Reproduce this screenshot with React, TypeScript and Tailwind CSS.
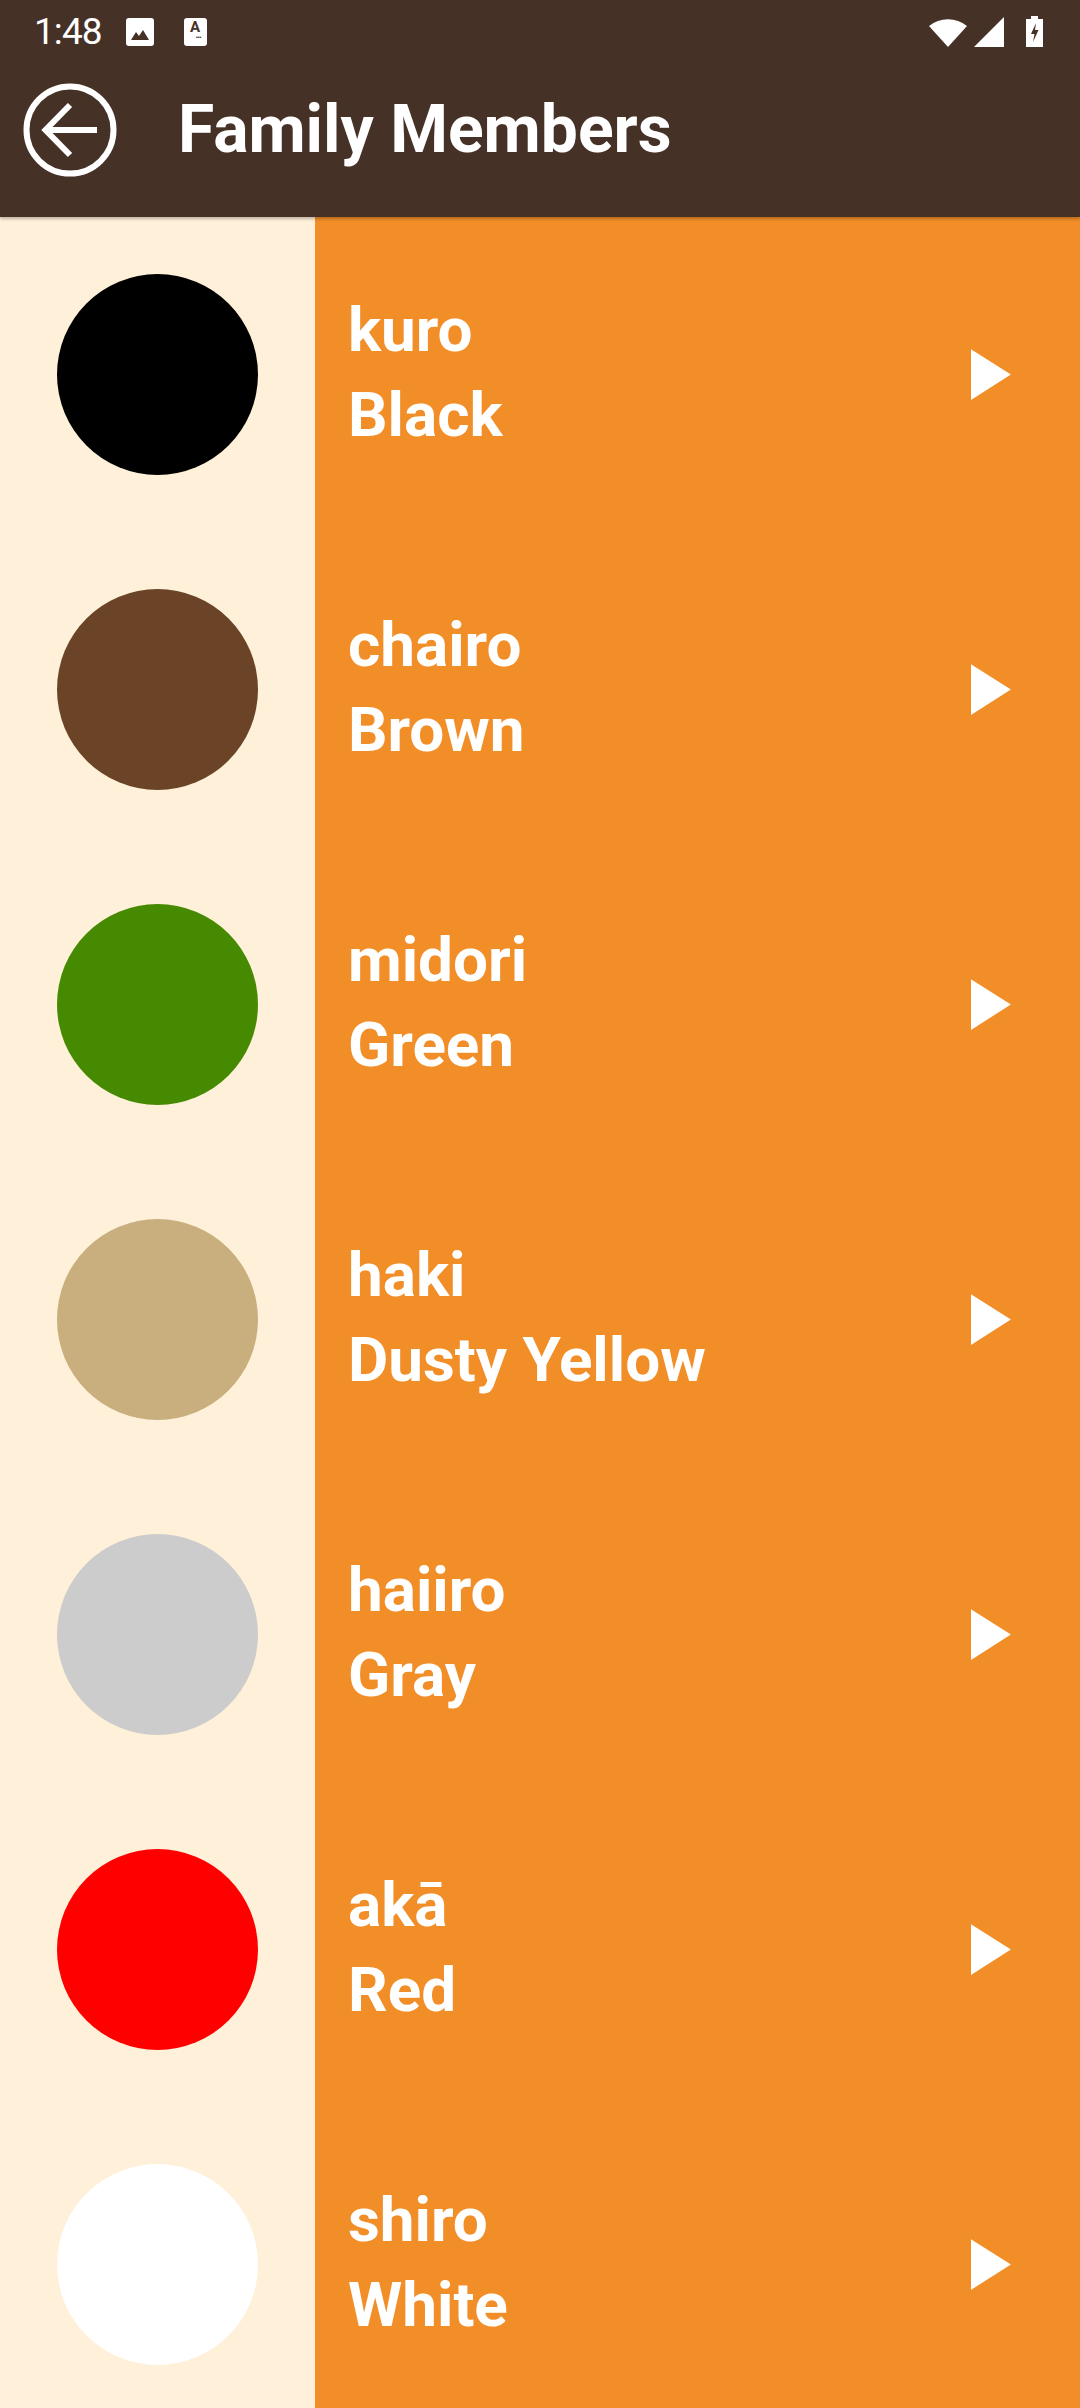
import React from "react";

const colors = [
  { jp: "kuro", en: "Black", swatch: "bg-[#000000]" },
  { jp: "chairo", en: "Brown", swatch: "bg-[#6b4327]" },
  { jp: "midori", en: "Green", swatch: "bg-[#458a00]" },
  { jp: "haki", en: "Dusty Yellow", swatch: "bg-[#c9ae7e]" },
  { jp: "haiiro", en: "Gray", swatch: "bg-[#cccccc]" },
  { jp: "akā", en: "Red", swatch: "bg-[#ff0000]" },
  { jp: "shiro", en: "White", swatch: "bg-[#ffffff]" },
];

function StatusBar() {
  return (
    <div className="h-[63px] flex items-center pl-[34px] pr-[36px] text-white">
      <span className="text-[37px] leading-none font-normal tracking-tight">1:48</span>
      {/* gallery notification */}
      <svg width="28" height="28" viewBox="0 0 28 28" className="ml-[24px]">
        <rect x="0" y="0" width="28" height="28" rx="3" fill="#fff" />
        <path d="M5 22 L10 14 L13 18 L17 12 L23 22 Z" fill="#463127" />
      </svg>
      {/* text notification */}
      <div className="ml-[30px] w-[23px] h-[28px] rounded-[3px] bg-white flex flex-col items-center justify-start pt-[2px]">
        <span className="text-[15px] leading-none font-bold text-[#463127]">A</span>
        <span className="text-[8px] leading-none text-[#463127] ml-[6px] -mt-[1px] tracking-[-1px]">•••</span>
      </div>
      <div className="ml-auto flex items-center gap-[6px]">
        <svg width="40" height="31" viewBox="0 0 40 31">
          <path d="M1 10 A 30 30 0 0 1 39 10 L20 31 Z" fill="#fff" />
        </svg>
        <svg width="31" height="30" viewBox="0 0 31 30">
          <path d="M30 0 L30 30 L0 30 Z" fill="#fff" />
        </svg>
        <svg width="19" height="32" viewBox="0 0 19 32" className="ml-[14px]">
          <path d="M6 0 H13 V3 H18 V31 H1 V3 H6 Z" fill="#fff" />
          <path d="M11 7 L6 18 H9.5 L8 26 L13.5 14 H10 Z" fill="#463127" />
        </svg>
      </div>
    </div>
  );
}

function Toolbar() {
  return (
    <div className="h-[154px] flex items-center pb-[20px]">
      <button className="ml-[20px] w-[100px] h-[100px] flex-none">
        <svg width="100" height="100" viewBox="0 0 100 100" fill="none" stroke="#fff" strokeWidth="6">
          <circle cx="50" cy="50" r="43.5" />
          <path d="M77 50 H26" />
          <path d="M50 25 L25.5 50 L50 75" strokeLinejoin="miter" />
        </svg>
      </button>
      <h1 className="ml-[58px] text-white text-[66px] leading-none font-bold">
        Family Members
      </h1>
    </div>
  );
}

function ColorRow({ jp, en, swatch }: { jp: string; en: string; swatch: string }) {
  return (
    <div className="flex h-[315px] flex-none">
      <div className="w-[315px] flex-none bg-[#fef0d9] flex items-center justify-center">
        <div className={`w-[201px] h-[201px] rounded-full ${swatch}`} />
      </div>
      <div className="flex-1 bg-[#f28e28] flex items-center">
        <div className="pl-[33px] pb-[6px] text-white font-bold text-[62px] leading-[85px]">
          <div>{jp}</div>
          <div>{en}</div>
        </div>
        <svg width="87" height="87" viewBox="0 0 24 24" className="ml-auto mr-[51px] flex-none">
          <path d="M8 5v14l11-7z" fill="#fff" />
        </svg>
      </div>
    </div>
  );
}

export default function App() {
  return (
    <div className="w-[1080px] h-[2408px] overflow-hidden flex flex-col bg-[#fef0d9] font-['Roboto',sans-serif]">
      <div className="bg-[#463127] flex-none shadow-[0_2px_3px_rgba(0,0,0,0.25)] relative z-10">
        <StatusBar />
        <Toolbar />
      </div>
      {colors.map((c) => (
        <ColorRow key={c.jp} {...c} />
      ))}
    </div>
  );
}
